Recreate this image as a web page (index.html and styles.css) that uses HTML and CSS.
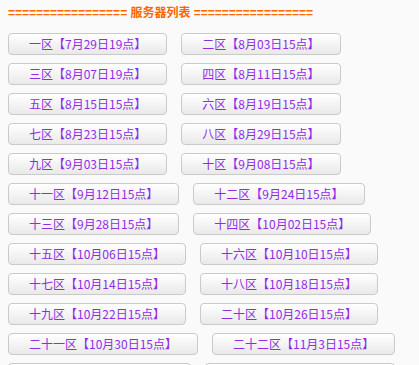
FILE: index.html
```html
<!DOCTYPE html>
<html lang="zh-CN">
<head>
    <meta charset="UTF-8">
    <meta name="viewport" content="width=device-width, initial-scale=1.0">
    <title>服务器列表</title>
    <link rel="stylesheet" href="styles.css">
</head>
<body>
    <div class="server-list">
        <p class="title">================= 服务器列表 =================</p>
        <div class="buttons">
            <button class="server">一区【7月29日19点】</button>
            <button class="server">二区【8月03日15点】</button>
            <button class="server">三区【8月07日19点】</button>
            <button class="server">四区【8月11日15点】</button>
            <button class="server">五区【8月15日15点】</button>
            <button class="server">六区【8月19日15点】</button>
            <button class="server">七区【8月23日15点】</button>
            <button class="server">八区【8月29日15点】</button>
            <button class="server">九区【9月03日15点】</button>
            <button class="server">十区【9月08日15点】</button>
            <button class="server">十一区【9月12日15点】</button>
            <button class="server">十二区【9月24日15点】</button>
            <button class="server">十三区【9月28日15点】</button>
            <button class="server">十四区【10月02日15点】</button>
            <button class="server">十五区【10月06日15点】</button>
            <button class="server">十六区【10月10日15点】</button>
            <button class="server">十七区【10月14日15点】</button>
            <button class="server">十八区【10月18日15点】</button>
            <button class="server">十九区【10月22日15点】</button>
            <button class="server">二十区【10月26日15点】</button>
            <button class="server">二十一区【10月30日15点】</button>
            <button class="server">二十二区【11月3日15点】</button>
            <button class="server">二十三区【11月7日15点】</button>
            <button class="server">二十四区【11月11日15点】</button>
        </div>
    </div>
</body>
</html>
```

FILE: styles.css
```css
* {
    box-sizing: border-box;
    margin: 0;
    padding: 0;
}

body {
    background-color: #fafafa;
    font-family: "Noto Sans CJK SC", sans-serif;
    font-size: 12px;
    padding: 5px 8px 0 8px;
    overflow: hidden;
}

.title {
    font-family: "Liberation Sans", "Noto Sans CJK SC", sans-serif;
    font-weight: bold;
    color: #ff6600;
    line-height: 16px;
    white-space: nowrap;
}

.buttons {
    display: flex;
    flex-wrap: wrap;
    gap: 8px 14px;
    width: 400px;
    margin-top: 12px;
}

.server {
    height: 22px;
    padding: 0 20px;
    font-family: "Noto Sans CJK SC", sans-serif;
    font-size: 12px;
    line-height: 20px;
    color: #8f2de6;
    background: linear-gradient(#ffffff, #e9e9e9);
    border: 1px solid #cacaca;
    border-radius: 4px;
    cursor: pointer;
    white-space: nowrap;
}

.server:hover {
    background: linear-gradient(#ffffff, #dddddd);
}
```
